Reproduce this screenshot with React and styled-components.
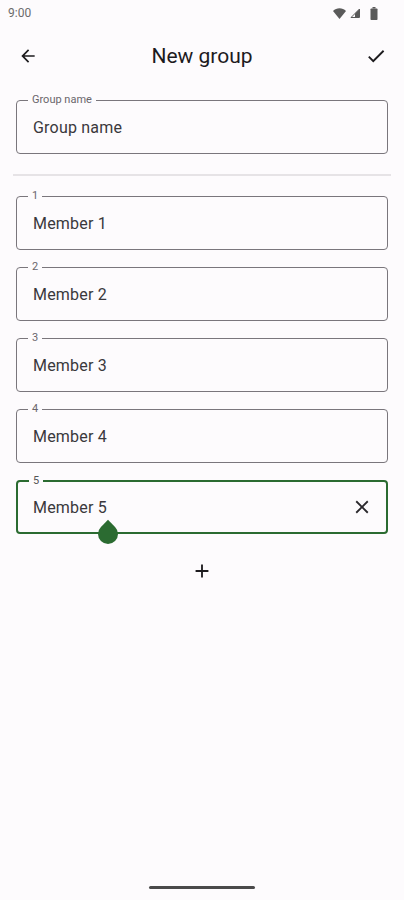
import React from 'react';
import styled, { createGlobalStyle } from 'styled-components';

const GREEN = '#2b6b31';
const BG = '#fdfbfd';

const GlobalStyle = createGlobalStyle`
  html, body {
    margin: 0;
    padding: 0;
    background: ${BG};
    font-family: Roboto, "Noto Sans", sans-serif;
  }
`;

const Screen = styled.div`
  width: 404px;
  height: 900px;
  display: flex;
  flex-direction: column;
  background: ${BG};
`;

const StatusBar = styled.div`
  height: 26px;
  display: flex;
  align-items: center;
  justify-content: space-between;
  padding: 0 26px 0 8px;
  color: #6b6b6b;
  font-size: 12px;
`;

const StatusIcons = styled.div`
  display: flex;
  align-items: center;
  gap: 4px;
`;

const Gap = styled.span`
  width: ${p => p.$w}px;
`;

const TopBar = styled.div`
  height: 60px;
  display: flex;
  align-items: center;
  justify-content: space-between;
  padding: 0 16px 0 16px;
`;

const IconButton = styled.button`
  width: 24px;
  height: 24px;
  padding: 0;
  border: none;
  background: none;
  display: flex;
  align-items: center;
  justify-content: center;
  color: #1d1b1e;
`;

const Title = styled.h1`
  margin: 0;
  font-size: 21px;
  font-weight: 400;
  color: #1d1b1e;
`;

const Form = styled.div`
  padding: 14px 16px 0;
  display: flex;
  flex-direction: column;
`;

const Field = styled.div`
  position: relative;
  height: 54px;
  box-sizing: border-box;
  border: ${p => (p.$focused ? `2px solid ${GREEN}` : '1px solid #7a767c')};
  border-radius: 4px;
  display: flex;
  align-items: center;
  padding: 0 ${p => (p.$focused ? '13px' : '14px')} 0 ${p => (p.$focused ? '15px' : '16px')};
  margin-bottom: ${p => p.$gap || 0}px;
`;

const Label = styled.span`
  position: absolute;
  top: -8px;
  left: 11px;
  padding: 0 4px;
  background: ${BG};
  font-size: 11px;
  line-height: 14px;
  color: ${p => (p.$focused ? '#555' : '#6a666c')};
`;

const Value = styled.span`
  flex: 1;
  font-size: 16px;
  color: #3a383c;
  letter-spacing: 0.2px;
`;

const Divider = styled.hr`
  margin: 20px -3px 20px;
  border: none;
  height: 2px;
  background: #e6e3e6;
`;

const Handle = styled.div`
  position: absolute;
  left: 80px;
  bottom: -12px;
  width: 20px;
  height: 20px;
  background: ${GREEN};
  border-radius: 0 50% 50% 50%;
  transform: rotate(45deg);
`;

const AddRow = styled.div`
  display: flex;
  justify-content: center;
  padding-top: 26px;
`;

const Spacer = styled.div`
  flex: 1;
`;

const HomeBar = styled.div`
  align-self: center;
  width: 106px;
  height: 3px;
  border-radius: 2px;
  background: #4a4a4a;
  margin-bottom: 11px;
`;

const Arrow = () => (
  <svg width="20" height="20" viewBox="0 0 24 24" fill="currentColor">
    <path d="M20 11H7.83l5.59-5.59L12 4l-8 8 8 8 1.41-1.41L7.83 13H20v-2z" />
  </svg>
);

const Check = () => (
  <svg width="22" height="22" viewBox="0 0 24 24" fill="currentColor">
    <path d="M9 16.17L4.83 12l-1.42 1.41L9 19 21 7l-1.41-1.41z" />
  </svg>
);

const Close = () => (
  <svg width="22" height="22" viewBox="0 0 24 24" fill="#2a282c">
    <path d="M19 6.41L17.59 5 12 10.59 6.41 5 5 6.41 10.59 12 5 17.59 6.41 19 12 13.41 17.59 19 19 17.59 13.41 12z" />
  </svg>
);

const Plus = () => (
  <svg width="22" height="22" viewBox="0 0 24 24" fill="#1d1b1e">
    <path d="M19 13h-6v6h-2v-6H5v-2h6V5h2v6h6v2z" />
  </svg>
);

const Wifi = () => (
  <svg width="13" height="11" viewBox="0 0 24 20" fill="#5a5a5a">
    <path d="M12 20L0 5.5C3.3 2.4 7.4 0.5 12 0.5s8.7 1.9 12 5L12 20z" />
  </svg>
);

const Signal = () => (
  <svg width="10" height="10" viewBox="0 0 20 20" fill="none" stroke="#5a5a5a" strokeWidth="2">
    <path d="M2 19L19 2v17H2z" />
    <path d="M10 19V11l8-8v16z" fill="#5a5a5a" stroke="none" />
  </svg>
);

const Battery = () => (
  <svg width="8" height="13" viewBox="0 0 8 13" fill="#5a5a5a">
    <rect x="2.5" y="0" width="3" height="1.5" />
    <rect x="0.5" y="1.5" width="7" height="11.5" rx="0.8" />
  </svg>
);

const members = ['Member 1', 'Member 2', 'Member 3', 'Member 4', 'Member 5'];

export default function App() {
  return (
    <>
      <GlobalStyle />
      <Screen>
        <StatusBar>
          <span>9:00</span>
          <StatusIcons>
            <Wifi />
            <Signal />
            <Gap $w={2} />
            <Battery />
          </StatusIcons>
        </StatusBar>
        <TopBar>
          <IconButton aria-label="Back"><Arrow /></IconButton>
          <Title>New group</Title>
          <IconButton aria-label="Done"><Check /></IconButton>
        </TopBar>
        <Form>
          <Field>
            <Label>Group name</Label>
            <Value>Group name</Value>
          </Field>
          <Divider />
          {members.map((m, i) => {
            const focused = i === members.length - 1;
            return (
              <Field key={m} $focused={focused} $gap={focused ? 0 : 17.1}>
                <Label $focused={focused}>{i + 1}</Label>
                <Value>{m}</Value>
                {focused && <Close />}
                {focused && <Handle />}
              </Field>
            );
          })}
          <AddRow><Plus /></AddRow>
        </Form>
        <Spacer />
        <HomeBar />
      </Screen>
    </>
  );
}
